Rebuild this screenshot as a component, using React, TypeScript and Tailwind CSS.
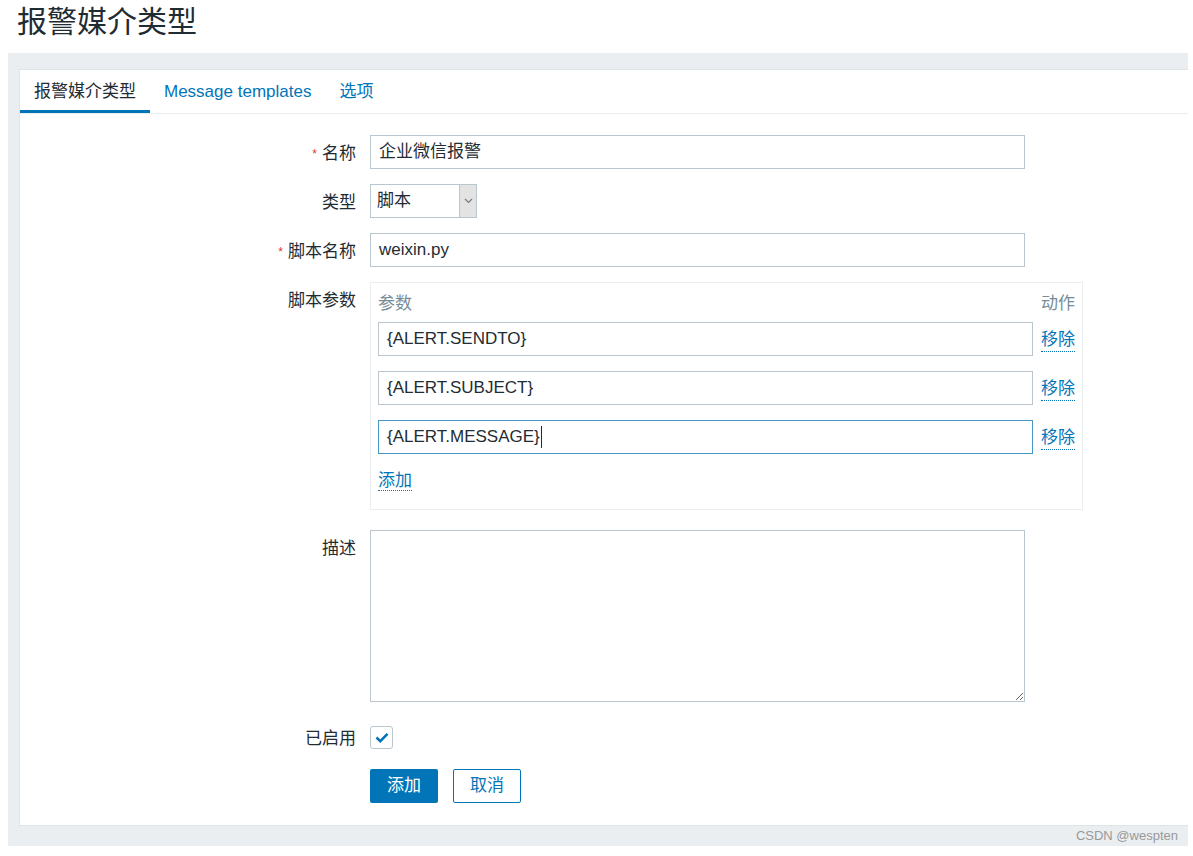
import React from 'react';

const font = { fontFamily: '"Liberation Sans", Arial, "Noto Sans CJK SC", sans-serif' };

const Label = ({ text, required }: { text: string; required?: boolean }) => (
  <div className="w-[336px] h-[34px] shrink-0 flex items-center justify-end pt-[3px] text-[17px] text-[#1f2c33]">
    {required && <span className="text-[12px] leading-none text-[#e33734] mr-[5px] self-start mt-[10px]">*</span>}
    <span className="leading-[24px]">{text}</span>
  </div>
);

const TextInput = ({ value, focused }: { value: string; focused?: boolean }) => (
  <div
    className={`w-[655px] h-[34px] border bg-white px-[8px] flex items-center text-[17px] text-[#1f2c33] ${
      focused ? 'border-[#4796c4]' : 'border-[#b9c6ce]'
    }`}
  >
    {value}
    {focused && <span className="w-px h-[22px] bg-[#1f2c33] ml-[1px]"></span>}
  </div>
);

const Link = ({ children }: { children: React.ReactNode }) => (
  <span className="text-[#0275b8] text-[17px] border-b border-dotted border-[#0275b8] leading-[22px] mt-[2px]">
    {children}
  </span>
);

export default function App() {
  const params = ['{ALERT.SENDTO}', '{ALERT.SUBJECT}', '{ALERT.MESSAGE}'];

  return (
    <div className="w-[1193px] h-[856px] bg-white overflow-hidden" style={font}>
      {/* Title */}
      <div className="h-[53px] pl-[17px]">
        <h1 className="text-[30px] leading-[44px] text-[#1f2c33]">报警媒介类型</h1>
      </div>

      {/* Gray wrapper */}
      <div className="ml-[8px] w-[1180px] bg-[#ebeef0] pt-[16px] pl-[11px]">
        <div className="h-[757px] bg-white border-l border-t border-b border-[#dfe4e7]">
          {/* Tabs */}
          <div className="flex h-[44px] border-b border-[#ebeef0]">
            <div className="px-[14px] flex items-center text-[17px] text-[#1f2c33] border-b-[3px] border-[#0275b8] pt-[3px]">
              报警媒介类型
            </div>
            <div className="px-[14px] flex items-center text-[17px] text-[#0275b8]">Message templates</div>
            <div className="px-[14px] flex items-center text-[17px] text-[#0275b8]">选项</div>
          </div>

          {/* Form */}
          <div className="pt-[21px] flex flex-col">
            <div className="flex gap-[14px]">
              <Label text="名称" required />
              <TextInput value="企业微信报警" />
            </div>

            <div className="flex gap-[14px] mt-[15px]">
              <Label text="类型" />
              <div className="w-[107px] h-[34px] border border-[#b9c6ce] flex bg-white">
                <div className="flex-1 flex items-center pl-[6px] text-[17px] text-[#1f2c33]">脚本</div>
                <div className="w-[17px] bg-[#e3e3e3] border-l border-[#b9c6ce] flex items-center justify-center">
                  <svg width="9" height="6" viewBox="0 0 9 6" fill="none">
                    <path d="M1 1l3.5 3.5L8 1" stroke="#7a7a7a" strokeWidth="1.2" />
                  </svg>
                </div>
              </div>
            </div>

            <div className="flex gap-[14px] mt-[15px]">
              <Label text="脚本名称" required />
              <TextInput value="weixin.py" />
            </div>

            <div className="flex gap-[14px] mt-[15px]">
              <Label text="脚本参数" />
              <div className="w-[713px] h-[228px] border border-[#ebeef0] px-[7px] pt-[9px]">
                <div className="flex justify-between text-[17px] leading-[24px] text-[#768d99]">
                  <span>参数</span>
                  <span>动作</span>
                </div>
                <div className="mt-[6px] flex flex-col gap-[15px]">
                  {params.map((p, i) => (
                    <div key={p} className="flex items-center gap-[8px]">
                      <TextInput value={p} focused={i === 2} />
                      <Link>移除</Link>
                    </div>
                  ))}
                </div>
                <div className="mt-[15px]">
                  <Link>添加</Link>
                </div>
              </div>
            </div>

            <div className="flex gap-[14px] mt-[20px]">
              <Label text="描述" />
              <textarea
                className="w-[655px] h-[172px] border border-[#b9c6ce] bg-white outline-none resize"
                defaultValue=""
              />
            </div>

            <div className="flex gap-[14px] mt-[18px] items-center">
              <Label text="已启用" />
              <div className="w-[23px] h-[23px] border border-[#b9c6ce] rounded-[3px] flex items-center justify-center bg-white">
                <svg width="14" height="11" viewBox="0 0 14 11" fill="none">
                  <path d="M1.5 5.5l3.8 3.6L12.5 1.8" stroke="#0275b8" strokeWidth="2.6" />
                </svg>
              </div>
            </div>

            <div className="flex mt-[15px] ml-[350px] gap-[15px]">
              <button className="w-[68px] h-[34px] bg-[#0275b8] text-white text-[17px] rounded-[2px]">添加</button>
              <button className="w-[68px] h-[34px] bg-white border border-[#0275b8] text-[#0275b8] text-[17px] rounded-[2px]">
                取消
              </button>
            </div>
          </div>
        </div>

        {/* Footer strip with watermark */}
        <div className="h-[20px] flex items-center justify-end pr-[10px] text-[13px] text-[#999]">
          CSDN @wespten
        </div>
      </div>
    </div>
  );
}
